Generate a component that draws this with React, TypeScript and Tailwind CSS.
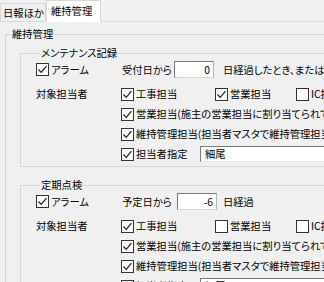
import React from "react";

const font = { fontFamily: '"Noto Sans CJK JP", "Noto Sans", sans-serif' };

function Check({ on }: { on: boolean }) {
  return (
    <span className="inline-flex w-[13px] h-[13px] shrink-0 items-center justify-center border border-[#333333] bg-white">
      {on && (
        <svg width="11" height="11" viewBox="0 0 11 11">
          <path d="M1.5 5.5 L4.2 8.3 L9.5 2.2" fill="none" stroke="#1a1a1a" strokeWidth="1.2" />
        </svg>
      )}
    </span>
  );
}

function CheckLabel({ on, label, className = "" }: { on: boolean; label: string; className?: string }) {
  return (
    <div className={`flex items-center gap-[2px] shrink-0 whitespace-nowrap ${className}`}>
      <Check on={on} />
      <span>{label}</span>
    </div>
  );
}

function NumBox({ value }: { value: string }) {
  return (
    <div className="h-[17px] w-[40px] shrink-0 border border-t-[#7a7a7a] border-l-[#7a7a7a] border-r-[#b5b5b5] border-b-[#d8d8d8] bg-white pr-[3px] text-right leading-[15px]">
      {value}
    </div>
  );
}

function Section(props: {
  title: string;
  dateLabel: string;
  labelW: string;
  value: string;
  tail: string;
  tailMl: string;
  sales: boolean;
}) {
  return (
    <fieldset className="ml-[14px] w-[340px] border border-[#d6d6d6] pl-[15px] pb-[2px]">
      <legend className="ml-[4px] px-[1px] leading-[14px] whitespace-nowrap">{props.title}</legend>

      {/* アラーム row */}
      <div className="mt-[1px] flex h-[17px] items-center whitespace-nowrap">
        <CheckLabel on label="アラーム" className="w-[85px]" />
        <span className={`${props.labelW} shrink-0 pl-[1px]`}>{props.dateLabel}</span>
        <NumBox value={props.value} />
        <span className={`${props.tailMl} shrink-0`}>{props.tail}</span>
      </div>

      {/* 対象担当者 */}
      <div className="mt-[6px] flex whitespace-nowrap">
        <div className="flex h-[20px] w-[85px] shrink-0 items-center">対象担当者</div>
        <div className="flex flex-col">
          <div className="flex h-[20px] items-center">
            <CheckLabel on label="工事担当" className="w-[94px]" />
            <CheckLabel on={props.sales} label="営業担当" className="w-[81px]" />
            <CheckLabel on={false} label="IC担当" />
          </div>
          <div className="flex h-[20px] items-center">
            <CheckLabel on label="営業担当(施主の営業担当に割り当てられている担当者)" />
          </div>
          <div className="flex h-[20px] items-center">
            <CheckLabel on label="維持管理担当(担当者マスタで維持管理担当に設定された担当者)" />
          </div>
          <div className="flex h-[20px] items-center">
            <CheckLabel on label="担当者指定" className="w-[79px]" />
            <div className="h-[16px] w-[160px] shrink-0 border border-t-[#7a7a7a] border-l-[#7a7a7a] border-r-[#e0e0e0] border-b-[#e8e8e8] bg-white pl-[4px] leading-[14px]">
              細尾
            </div>
          </div>
        </div>
      </div>
    </fieldset>
  );
}

export default function App() {
  return (
    <div
      className="h-[282px] w-[324px] overflow-hidden bg-[#f0f0f0] text-[10.3px] text-black [font-feature-settings:'palt']"
      style={font}
    >
      {/* Tabs */}
      <div className="flex h-[21px] items-end whitespace-nowrap">
        <div className="flex h-[18px] w-[46px] shrink-0 items-center border border-b-0 border-[#d9d9d9] pl-[2px] leading-[14px]">
          日報ほか
        </div>
        <div className="relative -mb-px flex h-[22px] w-[55px] shrink-0 items-center border border-b-0 border-[#d9d9d9] bg-white pb-[2px] pl-[4px] leading-[14px]">
          維持管理
        </div>
      </div>

      {/* Tab page */}
      <div className="border-t border-[#d9d9d9] pt-[5px]">
        <fieldset className="ml-[5px] w-[340px] border border-[#d6d6d6]">
          <legend className="ml-[5px] px-[1px] leading-[14px] whitespace-nowrap">維持管理</legend>
          <div className="mt-[5px]">
            <Section
              title="メンテナンス記録"
              dateLabel="受付日から"
              labelW="w-[53px]"
              value="0"
              tail="日経過したとき、または"
              tailMl="ml-[9px]"
              sales
            />
          </div>
          <div className="mt-[11px]">
            <Section
              title="定期点検"
              dateLabel="予定日から"
              labelW="w-[56px]"
              value="-6"
              tail="日経過"
              tailMl="ml-[6px]"
              sales={false}
            />
          </div>
        </fieldset>
      </div>
    </div>
  );
}
